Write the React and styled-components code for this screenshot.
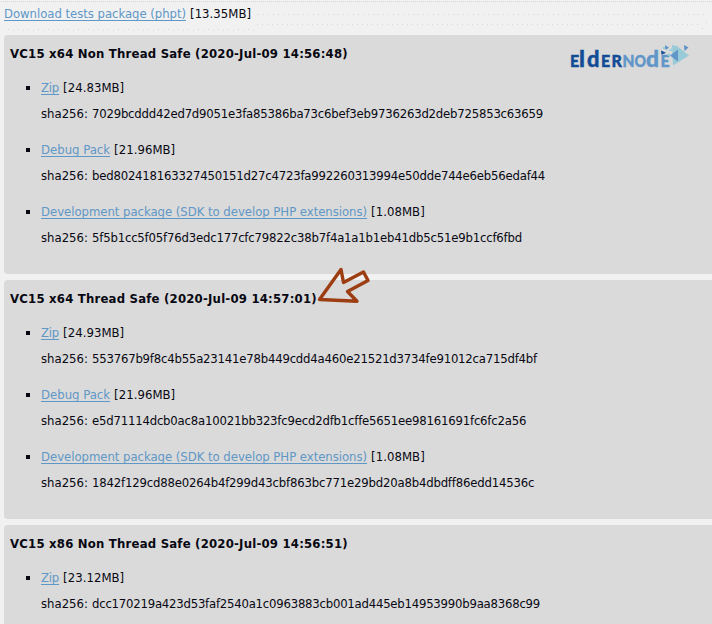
import React from 'react';
import styled, { createGlobalStyle } from 'styled-components';

const GlobalStyle = createGlobalStyle`
  body {
    margin: 0;
    overflow: hidden;
    background: #f1f1f1;
    color: #080812;
    font: 13px/26px 'DejaVu Sans Condensed', 'DejaVu Sans', sans-serif;
  }
`;

const Page = styled.main`
  position: relative;
  box-sizing: border-box;
  height: 624px;
  overflow: hidden;
  padding: 1px 0 0 4px;
  display: flex;
  flex-direction: column;
  gap: 6px;
`;

const TestsLine = styled.p`
  margin: 0;
  height: 28px;
  flex: none;
  display: flex;
  white-space: nowrap;
`;

const Link = styled.a`
  color: #5f97c6;
  letter-spacing: ${(p) => p.$tracking || 0}px;
  text-decoration: underline;
  text-decoration-thickness: 1px;
  text-underline-offset: 2px;
  text-decoration-skip-ink: none;
  margin-right: 4px;
`;

const Size = styled.span`
  letter-spacing: 0.05px;
`;

const Panel = styled.section`
  flex: none;
  box-sizing: border-box;
  height: 239px;
  padding: 10px 6px 0;
  background: #dadada;
  border-radius: 4px 0 0 4px;
`;

const Title = styled.h4`
  margin: 0 0 12px;
  font-size: 13px;
  line-height: 18px;
  letter-spacing: ${(p) => p.$tracking}px;
  white-space: nowrap;
`;

const Files = styled.ul`
  margin: 0;
  padding: 0;
  list-style: none;
  display: flex;
  flex-direction: column;
  gap: 10px;
`;

const File = styled.li`
  display: grid;
  grid-template-columns: 31px 1fr;
  white-space: nowrap;

  &::before {
    content: '';
    width: 4px;
    height: 4px;
    margin: 11px 0 0 16px;
    background: #080812;
  }
`;

const FileLine = styled.div`
  display: flex;
  height: 26px;
`;

const HashLabel = styled.span`
  width: 51px;
`;

const Hash = styled.span`
  letter-spacing: ${(p) => p.$tracking}px;
`;

const Overlay = styled.svg`
  position: absolute;
  inset: 0;
  pointer-events: none;
`;

const LogoText = styled.text`
  font: 900 16px Lato, sans-serif;
  fill: ${(p) => (p.$light ? '#6196c8' : '#124b96')};
  stroke: ${(p) => (p.$light ? '#6196c8' : '#124b96')};
  stroke-width: 0.4px;
`;

const TallLetter = styled.tspan`
  font-size: 23.5px;
`;

const LINKS = {
  zip: { name: 'Zip', tracking: -0.22 },
  debug: { name: 'Debug Pack', tracking: 0 },
  dev: { name: 'Development package (SDK to develop PHP extensions)', tracking: -0.036 },
};

const BUILDS = [
  {
    title: 'VC15 x64 Non Thread Safe (2020-Jul-09 14:56:48)',
    tracking: 0.21,
    files: [
      { link: LINKS.zip, size: '24.83MB', tracking: -0.212, hash: '7029bcddd42ed7d9051e3fa85386ba73c6bef3eb9736263d2deb725853c63659' },
      { link: LINKS.debug, size: '21.96MB', tracking: -0.209, hash: 'bed802418163327450151d27c4723fa992260313994e50dde744e6eb56edaf44' },
      { link: LINKS.dev, size: '1.08MB', tracking: -0.193, hash: '5f5b1cc5f05f76d3edc177cfc79822c38b7f4a1a1b1eb41db5c51e9b1ccf6fbd' },
    ],
  },
  {
    title: 'VC15 x64 Thread Safe (2020-Jul-09 14:57:01)',
    tracking: 0.21,
    files: [
      { link: LINKS.zip, size: '24.93MB', tracking: -0.206, hash: '553767b9f8c4b55a23141e78b449cdd4a460e21521d3734fe91012ca715df4bf' },
      { link: LINKS.debug, size: '21.96MB', tracking: -0.2, hash: 'e5d71114dcb0ac8a10021bb323fc9ecd2dfb1cffe5651ee98161691fc6fc2a56' },
      { link: LINKS.dev, size: '1.08MB', tracking: -0.189, hash: '1842f129cd88e0264b4f299d43cbf863bc771e29bd20a8b4dbdff86edd14536c' },
    ],
  },
  {
    title: 'VC15 x86 Non Thread Safe (2020-Jul-09 14:56:51)',
    tracking: 0.21,
    files: [
      { link: LINKS.zip, size: '23.12MB', tracking: -0.226, hash: 'dcc170219a423d53faf2540a1c0963883cb001ad445eb14953990b9aa8368c99' },
    ],
  },
];

function Build({ build }) {
  return (
    <Panel>
      <Title $tracking={build.tracking}>{build.title}</Title>
      <Files>
        {build.files.map((file) => (
          <File key={file.hash}>
            <div>
              <FileLine>
                <Link $tracking={file.link.tracking}>{file.link.name}</Link>
                <Size>[{file.size}]</Size>
              </FileLine>
              <FileLine>
                <HashLabel>sha256:</HashLabel>
                <Hash $tracking={file.tracking}>{file.hash}</Hash>
              </FileLine>
            </div>
          </File>
        ))}
      </Files>
    </Panel>
  );
}

function Speckles() {
  return (
    <g fill="none" stroke="#d6d6d6" strokeWidth="1">
      <path d="M1 1.5H712" strokeDasharray="1 1" />
      <path d="M258 14.5H704" strokeDasharray="1 4" />
      <path d="M257 24.5H698" strokeDasharray="1 4" />
      <path d="M8 29.5H255" strokeDasharray="1 9" />
      <path d="M13 30.5H255" strokeDasharray="1 9" />
      <path d="M706 22.5h1M702 28.5h1" />
    </g>
  );
}

function Logo() {
  return (
    <g>
      <LogoText y="67">
        <tspan x="570">E</tspan>
        <TallLetter x="579">l</TallLetter>
        <TallLetter x="587" textLength="12.5" lengthAdjust="spacingAndGlyphs">d</TallLetter>
        <tspan x="601">E</tspan>
        <tspan x="611.5">R</tspan>
      </LogoText>
      <LogoText y="67" $light>
        <tspan x="622.5" textLength="12" lengthAdjust="spacingAndGlyphs">N</tspan>
        <tspan x="634.5" textLength="11.5" lengthAdjust="spacingAndGlyphs">O</tspan>
        <TallLetter x="646" textLength="13" lengthAdjust="spacingAndGlyphs">d</TallLetter>
        <tspan x="660.5">E</tspan>
      </LogoText>
      <path d="M672 45l5 1 12 9.500-16 10z" fill="#98cad8" />
      <path d="M670 55.500l8-6v12z" fill="#6196c8" />
      <path d="M661 50.500l5 2.200-4.500 2z" fill="#124b96" />
      <path d="M665 45l4 2.700-3.500 2.300zM684 45l4.500 2.500-4 3.500z" fill="#5b91c8" />
      <path d="M668 51l4-3v3zM667 55l3-2v4zM663 47h2v2h-2z" fill="#98cad8" />
    </g>
  );
}

export default function App() {
  return (
    <>
      <GlobalStyle />
      <Page>
        <TestsLine>
          <Link $tracking={-0.04}>Download tests package (phpt)</Link>
          <Size>[13.35MB]</Size>
        </TestsLine>
        {BUILDS.map((build) => (
          <Build key={build.title} build={build} />
        ))}
        <Overlay width="712" height="624" viewBox="0 0 712 624">
          <Speckles />
          <Logo />
          <path
            d="M319.500 299.500L341 269.500L343.500 282.500L363.500 272L368 280.500L347.500 291.500L357 301.300Z"
            fill="none"
            stroke="#9c3d12"
            strokeWidth="3.4"
            strokeLinejoin="round"
          />
        </Overlay>
      </Page>
    </>
  );
}
